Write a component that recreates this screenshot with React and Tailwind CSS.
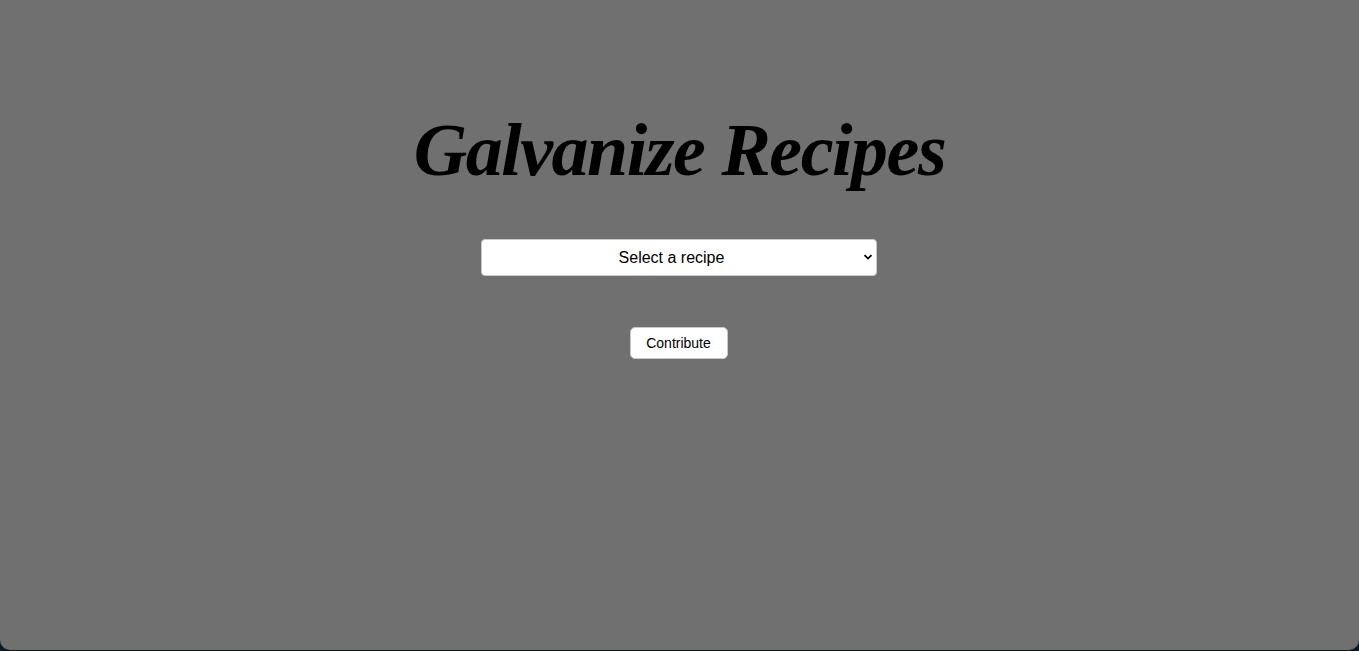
import React from "react";

function App() {
  return (
    <div className="h-[651px] w-full bg-[#0b1a20]">
      <div className="flex h-[650px] flex-col items-center rounded-b-[10px] bg-[#707070]">
        {/* Title */}
        <h1
          className="mt-[106px] text-[74px] font-bold italic leading-[88px] tracking-[-1.5px] text-black"
          style={{ fontFamily: '"Liberation Serif", "Times New Roman", serif' }}
        >
          Galvanize Recipes
        </h1>

        {/* Recipe select */}
        <div className="relative mt-[45px] mr-[2px] h-[37px] w-[396px]">
          <select
            className="h-full w-full appearance-none rounded-[4px] border border-[#c8c8c8] bg-white pr-[14px] text-center text-[16px] text-black outline-none"
            style={{ fontFamily: '"Liberation Sans", Arial, sans-serif', textAlignLast: "center" }}
            defaultValue=""
          >
            <option value="">Select a recipe</option>
          </select>
          <svg
            className="pointer-events-none absolute right-[4px] top-[13px]"
            width="10"
            height="10"
            viewBox="0 0 10 10"
          >
            <path d="M1.5 3.2 L5 6.6 L8.5 3.2" fill="none" stroke="black" strokeWidth="1.8" />
          </svg>
        </div>

        {/* Contribute */}
        <button
          className="mt-[51px] mr-[2px] h-[32px] w-[98px] rounded-[5px] border border-[#c8c8c8] bg-white text-[14px] text-black"
          style={{ fontFamily: '"Liberation Sans", Arial, sans-serif' }}
        >
          Contribute
        </button>
      </div>
    </div>
  );
}

export default App;
